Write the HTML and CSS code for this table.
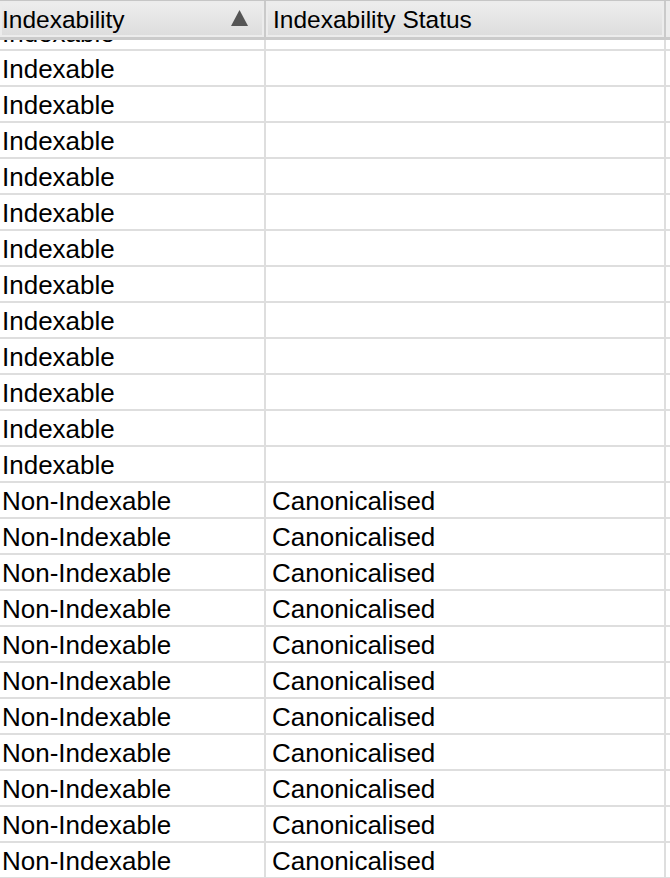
FILE: index.html
```html
<!DOCTYPE html>
<html>
<head>
<meta charset="utf-8">
<link rel="stylesheet" href="styles.css">
</head>
<body>
<div class="table">
  <div class="head">
    <div class="hcell c1"><span class="htext">Indexability</span><svg class="sort" width="17" height="16" viewBox="0 0 17 16"><polygon points="8.5,0 17,16 0,16" fill="#555"/></svg></div>
    <div class="hcell c2"><span class="htext">Indexability Status</span></div>
    <div class="hcell c3"></div>
  </div>
  <div class="body">
    <div class="rows">
      <div class="row"><div class="cell c1">Indexable</div><div class="cell c2"></div><div class="cell c3"></div></div>
      <div class="row"><div class="cell c1">Indexable</div><div class="cell c2"></div><div class="cell c3"></div></div>
      <div class="row"><div class="cell c1">Indexable</div><div class="cell c2"></div><div class="cell c3"></div></div>
      <div class="row"><div class="cell c1">Indexable</div><div class="cell c2"></div><div class="cell c3"></div></div>
      <div class="row"><div class="cell c1">Indexable</div><div class="cell c2"></div><div class="cell c3"></div></div>
      <div class="row"><div class="cell c1">Indexable</div><div class="cell c2"></div><div class="cell c3"></div></div>
      <div class="row"><div class="cell c1">Indexable</div><div class="cell c2"></div><div class="cell c3"></div></div>
      <div class="row"><div class="cell c1">Indexable</div><div class="cell c2"></div><div class="cell c3"></div></div>
      <div class="row"><div class="cell c1">Indexable</div><div class="cell c2"></div><div class="cell c3"></div></div>
      <div class="row"><div class="cell c1">Indexable</div><div class="cell c2"></div><div class="cell c3"></div></div>
      <div class="row"><div class="cell c1">Indexable</div><div class="cell c2"></div><div class="cell c3"></div></div>
      <div class="row"><div class="cell c1">Indexable</div><div class="cell c2"></div><div class="cell c3"></div></div>
      <div class="row"><div class="cell c1">Indexable</div><div class="cell c2"></div><div class="cell c3"></div></div>
      <div class="row"><div class="cell c1">Non-Indexable</div><div class="cell c2">Canonicalised</div><div class="cell c3"></div></div>
      <div class="row"><div class="cell c1">Non-Indexable</div><div class="cell c2">Canonicalised</div><div class="cell c3"></div></div>
      <div class="row"><div class="cell c1">Non-Indexable</div><div class="cell c2">Canonicalised</div><div class="cell c3"></div></div>
      <div class="row"><div class="cell c1">Non-Indexable</div><div class="cell c2">Canonicalised</div><div class="cell c3"></div></div>
      <div class="row"><div class="cell c1">Non-Indexable</div><div class="cell c2">Canonicalised</div><div class="cell c3"></div></div>
      <div class="row"><div class="cell c1">Non-Indexable</div><div class="cell c2">Canonicalised</div><div class="cell c3"></div></div>
      <div class="row"><div class="cell c1">Non-Indexable</div><div class="cell c2">Canonicalised</div><div class="cell c3"></div></div>
      <div class="row"><div class="cell c1">Non-Indexable</div><div class="cell c2">Canonicalised</div><div class="cell c3"></div></div>
      <div class="row"><div class="cell c1">Non-Indexable</div><div class="cell c2">Canonicalised</div><div class="cell c3"></div></div>
      <div class="row"><div class="cell c1">Non-Indexable</div><div class="cell c2">Canonicalised</div><div class="cell c3"></div></div>
      <div class="row"><div class="cell c1">Non-Indexable</div><div class="cell c2">Canonicalised</div><div class="cell c3"></div></div>
      <div class="row"><div class="cell c1">Non-Indexable</div><div class="cell c2">Canonicalised</div><div class="cell c3"></div></div>
    </div>
  </div>
</div>
</body>
</html>
```

FILE: styles.css
```css
html, body {
  margin: 0;
  padding: 0;
  background: #ffffff;
}
.table {
  width: 670px;
  height: 878px;
  overflow: hidden;
  font-family: "Liberation Sans", Arial, sans-serif;
  color: #000;
}
.head {
  display: flex;
  height: 40px;
  box-sizing: border-box;
  border-top: 1px solid #c6c6c6;
  border-bottom: 3px solid #cbcbcb;
  background: #cbcbcb;
}
.hcell {
  display: flex;
  align-items: center;
  box-sizing: border-box;
  height: 36px;
  background: linear-gradient(#eeeeee, #dcdcdc);
  box-shadow: inset 0 0 0 2px #ececec;
  border-right: 2px solid #cacaca;
  font-size: 24.5px;
  white-space: nowrap;
  overflow: hidden;
}
.hcell.c1 {
  width: 266px;
  padding-left: 2px;
  padding-right: 16px;
}
.hcell.c2 {
  width: 400px;
  padding-left: 7px;
}
.hcell.c3 {
  flex: 1;
  border-right: none;
}
.htext {
  flex: 1;
  padding-top: 1px;
}
.sort {
  display: block;
  margin-top: -3px;
}
.body {
  height: 838px;
  overflow: hidden;
}
.rows {
  margin-top: -25px;
}
.row {
  display: flex;
  height: 36px;
  box-sizing: border-box;
  border-bottom: 2px solid #dedede;
}
.cell {
  box-sizing: border-box;
  height: 34px;
  font-size: 26px;
  line-height: 34px;
  padding-top: 1px;
  white-space: nowrap;
  overflow: hidden;
  border-right: 2px solid #dedede;
}
.cell.c1 {
  width: 266px;
  padding-left: 2px;
}
.cell.c2 {
  width: 400px;
  padding-left: 6px;
}
.cell.c3 {
  flex: 1;
  border-right: none;
}
```
